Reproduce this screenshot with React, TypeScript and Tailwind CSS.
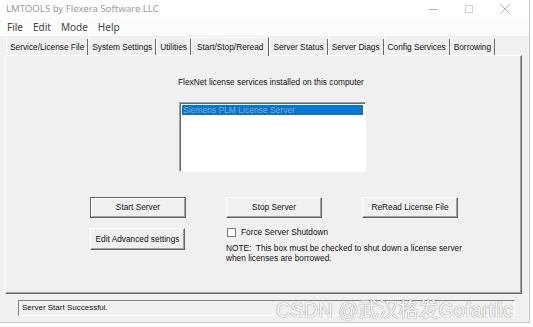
import React from "react";

const tabs = [
  "Service/License File",
  "System Settings",
  "Utilities",
  "Start/Stop/Reread",
  "Server Status",
  "Server Diags",
  "Config Services",
  "Borrowing",
];

const ui = "font-['Liberation_Sans',Arial,sans-serif]";

const WinButton = ({ label, primary = false, w = "w-[96px]" }: { label: string; primary?: boolean; w?: string }) => (
  <div
    className={`${w} h-[21px] flex items-center justify-center text-[8.3px] text-[#111] bg-[#f0f0f0] ${
      primary
        ? "border border-[#646464] shadow-[inset_1px_1px_0_#fff,inset_-1px_-1px_0_#a0a0a0]"
        : "border-t border-l border-t-white border-l-white border-b border-r border-b-[#646464] border-r-[#646464] shadow-[inset_-1px_-1px_0_#a0a0a0]"
    }`}
  >
    {label}
  </div>
);

export default function App() {
  return (
    <div className={`relative w-[533px] h-[327px] bg-white overflow-hidden ${ui}`}>
      <div className="w-[530px] h-[323px] bg-[#f0f0f0] border-r border-b border-[#c8c8c8] flex flex-col">
        {/* title bar */}
        <div className="h-[18px] bg-white flex items-center pl-[6px] font-['Noto_Sans',sans-serif] text-[9.6px] text-[#9a9a9a]">
          <span>LMTOOLS by Flexera Software LLC</span>
          <div className="ml-auto flex items-center h-full">
            <div className="w-[36px] flex justify-center">
              <div className="w-[9px] h-px bg-[#b0b0b0]" />
            </div>
            <div className="w-[36px] flex justify-center">
              <div className="w-[8px] h-[8px] border border-[#d0d0d0]" />
            </div>
            <div className="w-[36px] flex justify-center mr-[6px]">
              <svg width="10" height="10" viewBox="0 0 10 10">
                <path d="M0.5 0.5 L9.5 9.5 M9.5 0.5 L0.5 9.5" stroke="#a8a8a8" strokeWidth="0.9" />
              </svg>
            </div>
          </div>
        </div>
        {/* menu bar */}
        <div className="h-[18px] bg-[#fbfbfb] flex items-center gap-[10px] pl-[7px] font-['Noto_Sans',sans-serif] text-[10px] text-[#444]">
          <span>File</span>
          <span>Edit</span>
          <span>Mode</span>
          <span>Help</span>
        </div>
        {/* tabs */}
        <div className="h-[19px] flex items-end pl-[6px] text-[8.3px] text-[#111]">
          {tabs.map((t) =>
            t === "Start/Stop/Reread" ? (
              <div
                key={t}
                className="h-[19px] px-[5px] flex items-start pt-[3px] bg-[#f0f0f0] border-t border-l border-white border-r border-r-[#5a5a5a] -mb-px relative z-10"
              >
                {t}
              </div>
            ) : (
              <div key={t} className="h-[16px] px-[3px] flex items-center border-l border-white border-r border-r-[#6a6a6a]">
                {t}
              </div>
            )
          )}
        </div>
        {/* tab page */}
        <div className="ml-[5px] mr-[7px] h-[239px] border border-white border-r-[#6a6a6a] border-b-[#6a6a6a] shadow-[inset_-1px_-1px_0_#a0a0a0] flex flex-col text-[8.3px] text-[#111]">
          <div className="pl-[172px] pt-[21px] leading-[10px]">FlexNet license services installed on this computer</div>
          <div className="ml-[173px] mt-[15px] w-[187px] h-[70px] bg-white border-t border-l border-[#a0a0a0] shadow-[inset_1px_1px_0_#696969] border-b border-r border-b-white border-r-white p-[2px]">
            <div className="h-[10px] bg-[#0078d7] text-[#8ea7c4] text-[8.5px] leading-[10px] pl-[1px]">Siemens PLM License Server</div>
          </div>
          <div className="mt-[25px] ml-[84px] flex">
            <div className="flex flex-col gap-[10px]">
              <WinButton label="Start Server" primary />
              <div className="h-[22px] flex">
                <WinButton label="Edit Advanced settings" w="w-[95px] h-[22px]" />
              </div>
            </div>
            <div className="ml-[40px] flex flex-col">
              <div className="flex gap-[40px]">
                <WinButton label="Stop Server" />
                <WinButton label="ReRead License File" />
              </div>
              <div className="mt-[8px] flex items-center gap-[5px] pl-[1px]">
                <div className="w-[9px] h-[9px] bg-white border border-[#7a7a7a]" />
                <span>Force Server Shutdown</span>
              </div>
              <div className="mt-[5px] leading-[10px]">
                NOTE:&nbsp; This box must be checked to shut down a license server
                <br />
                when licenses are borrowed.
              </div>
            </div>
          </div>
        </div>
        {/* status bar */}
        <div className="flex-1 flex items-center pl-[18px] pr-[14px]">
          <div className="w-full h-[16px] border-t border-l border-[#808080] border-b border-r border-b-white border-r-white flex items-center pl-[3px] text-[8px] text-[#111]">
            Server Start Successful.
          </div>
        </div>
      </div>
      <div className="absolute left-[276px] top-[299px] font-['Liberation_Sans','Noto_Sans_CJK_SC',sans-serif] text-[20px] leading-[22px] text-[#f6f6f6] [text-shadow:0_0_1px_#9a9a9a,0_0_1px_#9a9a9a]">
        CSDN @武汉格发Gofartlic
      </div>
    </div>
  );
}
